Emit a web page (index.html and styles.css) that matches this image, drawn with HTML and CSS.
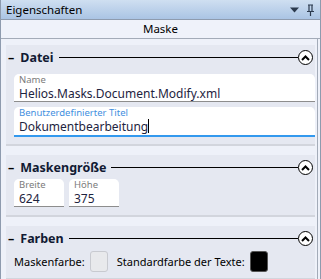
FILE: index.html
```html
<!DOCTYPE html>
<html lang="de">
<head>
    <meta charset="UTF-8">
    <title>Eigenschaften</title>
    <link rel="stylesheet" href="styles.css">
</head>
<body>

<div class="window">
    <div class="titlebar">
        <span class="title">Eigenschaften</span>
        <span class="tools">
            <svg width="9" height="6" viewBox="0 0 9 6"><path d="M0 0.5 H9 L4.5 5.5 Z" fill="#2b3a4e"/></svg>
            <svg width="9" height="12" viewBox="0 0 9 12"><path d="M2 1 H7 M3 1 V7 M6 1 V7 M1 7.5 H8 M4.5 8 V12" stroke="#2b3a4e" stroke-width="1.2" fill="none"/></svg>
        </span>
    </div>
    <div class="tabrow">Maske</div>

    <div class="content">
        <div class="group">
            <div class="group-head">
                <span class="dash">–</span>
                <span class="group-title">Datei</span>
                <span class="rule"></span>
                <span class="toggle"><svg width="9" height="6" viewBox="0 0 9 6"><path d="M1 5 L4.5 1.5 L8 5" stroke="#000" stroke-width="2" fill="none"/></svg></span>
            </div>
            <div class="field">
                <div class="label">Name</div>
                <div class="value">Helios.Masks.Document.Modify.xml</div>
            </div>
            <div class="field active">
                <div class="label">Benutzerdefinierter Titel</div>
                <div class="value">Dokumentbearbeitung<span class="caret"></span></div>
            </div>
        </div>

        <div class="group size">
            <div class="group-head">
                <span class="dash">–</span>
                <span class="group-title">Maskengröße</span>
                <span class="rule"></span>
                <span class="toggle"><svg width="9" height="6" viewBox="0 0 9 6"><path d="M1 5 L4.5 1.5 L8 5" stroke="#000" stroke-width="2" fill="none"/></svg></span>
            </div>
            <div class="size-row">
                <div class="field small">
                    <div class="label">Breite</div>
                    <div class="value">624</div>
                </div>
                <div class="field small">
                    <div class="label">Höhe</div>
                    <div class="value">375</div>
                </div>
            </div>
        </div>

        <div class="group last">
            <div class="group-head">
                <span class="dash">–</span>
                <span class="group-title">Farben</span>
                <span class="rule"></span>
                <span class="toggle"><svg width="9" height="6" viewBox="0 0 9 6"><path d="M1 5 L4.5 1.5 L8 5" stroke="#000" stroke-width="2" fill="none"/></svg></span>
            </div>
            <div class="color-row">
                <span>Maskenfarbe:</span>
                <span class="swatch"></span>
                <span>Standardfarbe der Texte:</span>
                <span class="swatch dark"></span>
            </div>
        </div>
    </div>
</div>

</body>
</html>
```

FILE: styles.css
```css
* {
    box-sizing: border-box;
}
body {
    margin: 0;
    font-family: "Noto Sans", "Open Sans", sans-serif;
    font-size: 11.5px;
    line-height: 16px;
    color: #000;
    background-color: #eef1f9;
}
.window {
    width: 321px;
    height: 279px;
    border-left: 1px solid #8e9bae;
    border-right: 1px solid #8e9bae;
    overflow: hidden;
}
.titlebar {
    height: 20px;
    display: flex;
    align-items: center;
    justify-content: space-between;
    padding: 0 5px;
    background: linear-gradient(#cfdff1, #aac4e4);
    border-bottom: 1px solid #8e9bae;
}
.tools {
    display: flex;
    align-items: center;
    gap: 7px;
}
.tabrow {
    height: 19px;
    line-height: 18px;
    text-align: center;
    background-color: #eff2fa;
    border-bottom: 1px solid #a3abb8;
}
.content {
    padding: 6px 2px 0 5px;
    border-right: 1px solid #a3abb8;
    margin-right: 2px;
    height: 240px;
}
.group {
    background-color: #e5e8f1;
    border-bottom: 2px solid #d2d5dd;
    padding: 4px 0 7px 8px;
    margin-bottom: 9px;
}
.group.size {
    padding-bottom: 8px;
}
.group.last {
    margin-bottom: 0;
    padding-bottom: 6px;
}
.group-head {
    height: 17px;
    display: flex;
    align-items: center;
    margin-left: -6px;
    padding-right: 2px;
}
.dash,
.group-title {
    font-weight: bold;
    font-size: 12.5px;
    line-height: 17px;
}
.dash {
    margin-right: 6px;
}
.group-title {
    color: #111a33;
}
.rule {
    flex: 1;
    height: 1px;
    background-color: #000;
    margin-left: 5px;
}
.toggle {
    width: 15px;
    height: 15px;
    border: 1px solid #000;
    border-radius: 50%;
    background-color: #fff;
    display: flex;
    align-items: center;
    justify-content: center;
}
.field {
    background-color: #fff;
    border-radius: 5px 5px 0 0;
    border-bottom: 1px solid #8d8d8d;
    padding: 0 5px;
    height: 28px;
    margin-top: 8px;
}
.field + .field {
    margin-top: 5px;
}
.field.active {
    border-bottom: 2px solid #3399ee;
    height: 30px;
}
.label {
    font-size: 9.5px;
    line-height: 12px;
    color: #7b7b7b;
}
.active .label {
    color: #3f8fe0;
}
.value {
    font-size: 12px;
    line-height: 15px;
    color: #1e2440;
}
.caret {
    display: inline-block;
    width: 1px;
    height: 14px;
    background-color: #000;
    vertical-align: top;
}
.size-row {
    display: flex;
    gap: 5px;
}
.size-row .field {
    width: 50px;
    margin-top: 3px;
}
.color-row {
    display: flex;
    align-items: center;
    gap: 5px;
    margin-top: 4px;
    font-size: 11px;
}
.swatch {
    width: 18px;
    height: 21px;
    border: 1px solid #c8cad0;
    border-radius: 3px;
    background-color: #e8e9ec;
    margin-right: 4px;
}
.swatch.dark {
    background-color: #000;
    border-color: #555;
}
```
